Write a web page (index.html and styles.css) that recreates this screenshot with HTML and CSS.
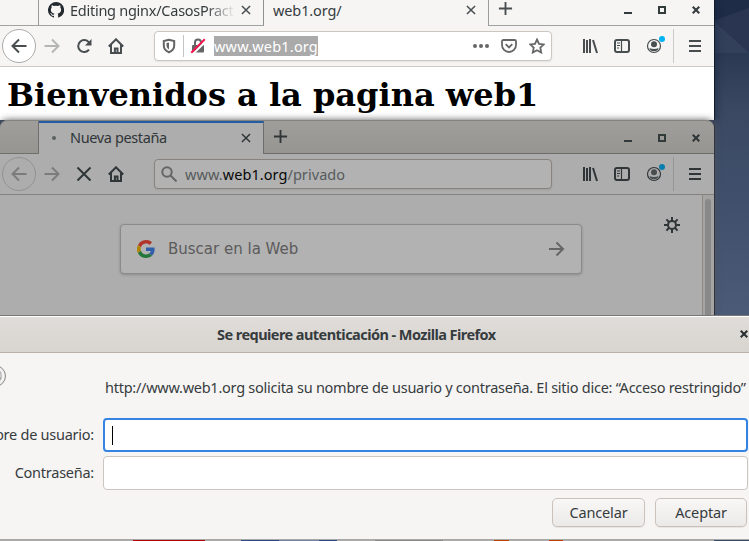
FILE: index.html
```html
<!DOCTYPE html>
<html lang="es">
<head>
<meta charset="utf-8">
<title>Mozilla Firefox</title>
<link rel="stylesheet" href="styles.css">
</head>
<body>
<svg class="defs" aria-hidden="true">
  <symbol id="back" viewBox="0 0 16 16"><path d="M8 1.500 1.500 8 8 14.500M1.500 8H15.500" /></symbol>
  <symbol id="forward" viewBox="0 0 16 16"><path d="m8 1.500 6.500 6.500L8 14.500M14.500 8H.5" /></symbol>
  <symbol id="home" viewBox="0 0 16 16"><path d="M.8 8.500 8 1.300l7.200 7.200M3 7v8h10V7M6.900 15v-4.500h2.600V15" /></symbol>
  <symbol id="cross" viewBox="0 0 16 16"><path d="m1.500 1.500 13 13m0-13-13 13" /></symbol>
  <symbol id="plus" viewBox="0 0 16 16"><path d="M8 1v14M1 8h14" /></symbol>
  <symbol id="library" viewBox="0 0 16 16"><path d="M2 1v14M5 2v13M8 1v14M11 2l4 13" /></symbol>
  <symbol id="sidebar" viewBox="0 0 16 16"><rect x="1" y="2" width="14" height="12" rx="2"/><path class="thin" d="M7.500 2v12M3 5h3M3 7.500h3M3 10h2"/></symbol>
  <symbol id="account" viewBox="0 0 16 16"><circle class="thin" cx="8" cy="8" r="6.500"/><circle class="solid" cx="8" cy="6.300" r="3"/><path class="solid" d="M3.500 10q1.700 1.100 4.500 1.100t4.500-1.100Q12 13.300 8 13.300T3.500 10Z"/></symbol>
  <symbol id="menu" viewBox="0 0 16 16"><path d="M2 3h12M2 8h12M2 13h12"/></symbol>
</svg>

<section class="window">
  <header class="tabs">
    <div class="stub"></div>
    <div class="tab first"><svg class="github" viewBox="0 0 16 16"><path d="M8 0a8 8 0 0 0-2.500 15.600c.4.100.5-.2.500-.4v-1.400c-2.200.5-2.700-1-2.700-1-.4-.9-.9-1.200-.9-1.200-.7-.5.100-.5.100-.5.800.1 1.200.8 1.200.8.700 1.200 1.900.9 2.300.7.100-.5.300-.9.500-1.100-1.800-.2-3.600-.9-3.600-4 0-.9.300-1.600.8-2.100-.1-.2-.4-1 .1-2.100 0 0 .7-.2 2.200.8a7.600 7.600 0 0 1 4 0c1.500-1 2.200-.8 2.200-.8.500 1.100.2 1.900.1 2.100.5.500.8 1.200.8 2.100 0 3.100-1.800 3.800-3.600 4 .3.300.6.800.6 1.500v2.200c0 .2.100.5.500.4A8 8 0 0 0 8 0Z"/></svg><span class="label editing">Editing nginx/CasosPract</span><svg class="icon close"><use href="#cross"/></svg></div>
    <div class="tab second"><span class="label web">web1.org/</span><svg class="icon close"><use href="#cross"/></svg></div>
    <div class="rest"><svg class="icon plus"><use href="#plus"/></svg><div class="controls"><i class="min"></i><i class="max"></i><svg class="icon wclose"><use href="#cross"/></svg></div></div>
  </header>
  <nav class="toolbar">
    <span class="backbtn"><svg class="icon"><use href="#back"/></svg></span>
    <svg class="icon fwd"><use href="#forward"/></svg>
    <svg class="icon reload" viewBox="0 0 16 16"><path d="M13 11.700A6 6 0 1 1 12.900 4.300L14 6"/><path class="solid" d="M15.500 1v6.500H9Z"/></svg>
    <svg class="icon home"><use href="#home"/></svg>
    <div class="urlbar">
      <svg class="icon shield" viewBox="0 0 16 16"><path d="M8 1.800 2.800 3v4.500c0 3.300 2.200 5.600 5.200 6.800 3-1.200 5.200-3.500 5.200-6.800V3Z"/><path class="solid" d="M8 4.500v7c-1.600-1-2.500-2.300-2.500-4V5Z"/></svg>
      <span class="urlsep"></span>
      <svg class="icon lock" viewBox="0 0 16 16"><path d="M5 7V4.500a3 3 0 0 1 6 0V7"/><rect class="solid" x="2" y="7" width="12" height="7.500" rx="1"/><path class="gap" d="M2.800 16.200 16.200 2.800"/><path class="red" d="M1.200 14.800 14.800 1.200"/></svg>
      <span class="selected">www.web1.org</span>
      <span class="dots"><i></i><i></i><i></i></span>
      <svg class="icon pocket" viewBox="0 0 16 16"><path d="M2.500 2h11Q15 2 15 3.500V7a7 7 0 0 1-14 0V3.500Q1 2 2.500 2ZM4.700 6.200 8 9.400l3.300-3.200"/></svg>
      <svg class="icon star" viewBox="0 0 16 16"><path d="m8 1.500 2 4.300 4.800.6-3.500 3.200.9 4.900L8 12.200l-4.200 2.300.9-4.900L1.200 6.400 6 5.800Z"/></svg>
    </div>
    <div class="tools"><svg class="icon"><use href="#library"/></svg><svg class="icon"><use href="#sidebar"/></svg><span class="account"><svg class="icon"><use href="#account"/></svg><i></i></span><span class="toolsep"></span><svg class="icon menu"><use href="#menu"/></svg></div>
  </nav>
  <main><h1>Bienvenidos a la pagina web1</h1></main>
</section>

<section class="window dim">
  <header class="tabs">
    <div class="stub"></div>
    <div class="tab active"><span class="loading"></span><span class="label nueva">Nueva pestaña</span><svg class="icon close"><use href="#cross"/></svg></div>
    <div class="rest"><svg class="icon plus"><use href="#plus"/></svg><div class="controls"><i class="min"></i><i class="max"></i><svg class="icon wclose"><use href="#cross"/></svg></div></div>
  </header>
  <nav class="toolbar">
    <span class="backbtn"><svg class="icon"><use href="#back"/></svg></span>
    <svg class="icon fwd"><use href="#forward"/></svg>
    <svg class="icon reload"><use href="#cross"/></svg>
    <svg class="icon home"><use href="#home"/></svg>
    <div class="urlbar"><svg class="icon search" viewBox="0 0 16 16"><circle cx="6" cy="6" r="4.700"/><path d="m9.500 9.500 6 6"/></svg><span class="address">www.<b>web1.org</b>/privado</span></div>
    <div class="tools"><svg class="icon"><use href="#library"/></svg><svg class="icon"><use href="#sidebar"/></svg><span class="account"><svg class="icon"><use href="#account"/></svg><i></i></span><span class="toolsep"></span><svg class="icon menu"><use href="#menu"/></svg></div>
  </nav>
  <main class="newtab">
    <div class="searchbox"><svg class="google" viewBox="0 0 48 48"><path class="g-red" d="M24 9.500c3.500 0 6.700 1.200 9.200 3.600l6.900-6.900A24 24 0 0 0 2.600 13.200l8 6.200C12.400 13.700 17.700 9.500 24 9.500Z"/><path class="g-blue" d="M47 24.500c0-1.600-.2-3.100-.4-4.500H24v9h12.900a11 11 0 0 1-4.800 7.300l7.700 6C44.400 38 47 31.800 47 24.500Z"/><path class="g-yellow" d="M10.500 28.600a14 14 0 0 1 0-9.200l-8-6.200a24 24 0 0 0 0 21.600Z"/><path class="g-green" d="M24 48c6.500 0 11.900-2.100 15.900-5.800l-7.700-6c-2.200 1.500-4.900 2.300-8.200 2.300-6.300 0-11.600-4.200-13.500-9.900l-8 6.200A24 24 0 0 0 24 48Z"/></svg><span>Buscar en la Web</span><svg class="icon go"><use href="#forward"/></svg></div>
    <svg class="icon gear" viewBox="0 0 16 16"><circle cx="8" cy="8" r="4"/><path d="M8 0v4m0 8v4M0 8h4m8 0h4M2.400 2.400l2.800 2.800m5.600 5.600 2.800 2.800m0-11.200-2.800 2.800m-5.600 5.600-2.800 2.800"/></svg>
    <div class="scroll"><i></i></div>
  </main>
</section>

<section class="dialog">
  <header><strong>Se requiere autenticación - Mozilla Firefox</strong><svg class="icon dclose"><use href="#cross"/></svg></header>
  <div class="message"><svg class="keys" viewBox="0 0 24 24"><circle class="ring" cx="12" cy="12" r="10.500"/><circle class="ring inner" cx="12" cy="12" r="8"/><path d="M10 17q5 1 8-3M14 9l3-1-1 4"/></svg><p>http://www.web1.org solicita su nombre de usuario y contraseña. El sitio dice: “Acceso restringido”</p></div>
  <form>
    <label class="userlabel">Nombre de usuario:</label><div class="field focus"><i></i></div>
    <label>Contraseña:</label><div class="field"></div>
  </form>
  <footer><button class="cancel">Cancelar</button><button class="accept">Aceptar</button></footer>
</section>
<div class="bottom"></div>
</body>
</html>
```
FILE: styles.css
```css
*{box-sizing:border-box}
body{margin:0;width:749px;height:541px;overflow:hidden;display:flex;flex-direction:column;font-family:"Noto Sans",sans-serif;font-size:14.5px;color:#363c3e;background:linear-gradient(42deg,#33405a 0 23px,transparent 24px) 714px 20px/35px 33px no-repeat,linear-gradient(160deg,#1f2c47 0 19px,#2a3651 20px) 714px 0/35px 53px no-repeat,linear-gradient(#2b3852 50px,#3b4862 110px,#40506c 200px,#4b5b78 320px,#64758f)}
.defs{position:absolute;width:0;height:0}
.icon{width:16px;height:16px;flex:none;display:block;fill:none;stroke:#484e50;stroke-width:2}
.thin{stroke-width:1.2}.solid{fill:#484e50;stroke:none}
.window{width:714px;height:120px;flex:none;background:#f6f5f4;box-shadow:1px 0 #111b2c,3px 0 7px #14203970}
.tabs{display:flex;height:26px;line-height:20px}
.stub{width:39px;border-right:1px solid #989b98;border-bottom:1px solid #a2a39f}
.tab{display:flex;flex:none;white-space:nowrap}
.first{width:225px;padding-left:9px;border-right:1px solid #8e9290;border-bottom:1px solid #a2a39f}
.second{width:225px;padding-left:9px;border-right:1px solid #999c99}
.github{width:16px;height:16px;margin:2px 6px 0 0;fill:#24292e;flex:none}
.label{display:block;overflow:hidden}
.editing{width:165px;letter-spacing:-.26px;-webkit-mask-image:linear-gradient(90deg,#000 136px,transparent)}
.close{width:10px;height:10px;margin:5px 0 0 6px;stroke-width:2.400}
.second .close{margin-left:auto;margin-right:12px}
.web{letter-spacing:-.12px}
.rest{display:flex;flex:1;border-bottom:1px solid #a2a39f}
.plus{width:15px;height:15px;margin:1px 0 0 9px}
.controls{display:flex;margin-left:auto;padding-top:6px}
.min{width:8px;height:2px;background:#333a3c;margin:6px 26px 0 0}
.max{width:8px;height:8px;border:2px solid #333a3c;margin-right:26px}
.wclose{width:8px;height:8px;margin-right:14px;stroke:#333a3c;stroke-width:4}
.toolbar{height:41px;display:flex;align-items:center;border-bottom:1px solid #cdc7c1}
.backbtn{width:34px;height:34px;margin-left:2px;border:1px solid #aaa;border-radius:50%;background:#fff;display:grid;place-items:center}
.fwd{margin-left:8px;stroke:#b4b5b5}.reload,.home{margin-left:16px}
.urlbar{width:398px;height:30px;margin-left:30px;background:#fff;border:1px solid #cbc6c0;border-radius:4px;display:flex;align-items:center;line-height:20px;box-shadow:0 1px 2px #00000015}
.shield{margin-left:6px;stroke:#656565}.shield .solid,.lock .solid{fill:#656565}.urlsep{width:1px;height:22px;background:#c4c4c4;margin:0 6px}
.lock{stroke:#656565}.lock .red{stroke:#f01850}.lock .gap{stroke:#fff}
.selected{background:#aaa;color:#fff;margin-left:8px;width:104px;white-space:nowrap;letter-spacing:.19px}
.dots{display:flex;gap:2px;margin-left:155px}.dots i{width:4px;height:4px;background:#666;border-radius:50%}
.pocket,.star{margin-left:12px;stroke:#666;stroke-width:1.800}
.tools{display:flex;align-items:center;margin-left:30px}.tools>.icon:nth-child(2){margin-left:16px}
.account{position:relative;margin-left:16px}.account i{position:absolute;left:13px;top:-2px;width:6px;height:6px;border-radius:50%;background:#00b3f4}
.toolsep{width:1px;height:34px;background:#ccc;margin-left:11px}.menu{margin-left:13px}
main{background:#fff;height:53px}
h1{font:bold 32px/37px "DejaVu Serif",serif;color:#000;margin:0;padding:10px 0 0 7px;white-space:nowrap}
.dim{height:195px;background:#adadad;border-radius:8px 8px 0 0;box-shadow:0 0 7px #555,1px 0 #111b2c;position:relative;color:#303638}
.dim .tabs{height:34px;line-height:33px;background:linear-gradient(#9f9e9b,#969590);border-top:1px solid #83837f;border-radius:8px 8px 0 0}
.dim .stub{border-color:#706f6d}.dim .rest{border-color:#6c6c6a}
.active{width:225px;background:#adadad;border-top:2px solid #215ca4;border-right:1px solid #6d6d6c;line-height:29px}
.loading{width:4px;height:4px;border-radius:50%;background:#5d6060;margin:13px 14px 0 13px}
.nueva{width:171px;letter-spacing:-.37px}.active .close{margin:10px 0 0 0}
.dim .controls{padding-top:13px}.dim .plus{margin-top:8px}
.dim .icon:not(.fwd,.search,.go){stroke:#303638}.dim .solid{fill:#303638}
.dim .toolbar{border-color:#85817f;height:41px}.dim .backbtn{background:transparent;border-color:#929292}.dim .backbtn .icon,.dim .fwd{stroke:#7c7c7c!important}
.dim .urlbar{background:#b2b2b2;border-color:#89837f}
.search{margin-left:6px;stroke:#666}.address{margin-left:8px;color:#565a5b;letter-spacing:.06px}.address b{font-weight:400;color:#080808}
.dim .account i{background:#087eae}.dim .toolsep{background:#949494}
.newtab{background:#adadad;height:120px;display:flex}
.searchbox{margin:29px 0 0 120px;width:462px;height:50px;border:1px solid #8a8a8a;border-radius:4px;background:#b2b2b2;display:flex;align-items:center;box-shadow:0 1px 3px #0003;font:15px "DejaVu Sans",sans-serif;color:#5b5b5b;white-space:nowrap}
.google{width:18px;height:18px;margin:0 13px 0 16px}.g-red{fill:#b1342b}.g-blue{fill:#305eaa}.g-yellow{fill:#af8504}.g-green{fill:#25763b}
.go{margin:0 16px 0 auto;stroke:#666;width:17px}
.gear{margin:22px 0 0 82px}.scroll{margin-left:auto;width:12px;border-left:1px solid #8e8b87;background:#a5a4a2;padding:4px 2px 0}.scroll i{display:block;width:6px;height:130px;background:#898989;border-radius:4px}
.dialog{height:224px;flex:none;position:relative;background:#f6f5f4;border-top:1px solid #fff;box-shadow:0 -1px #777;border-bottom:1px solid #a9a9a7;margin-top:1px}
.dialog header{height:36px;background:linear-gradient(#e0ddda,#d8d4cf);border-bottom:1px solid #bcb1a9;display:flex;line-height:34px}
.dialog strong{padding-left:217px;letter-spacing:-.55px;white-space:nowrap}.dclose{width:8px;height:8px;margin:13px 1px 0 auto;stroke:#292f31;stroke-width:4}
.message{height:65px;display:flex;position:relative}.keys{position:absolute;left:-17px;top:11px;width:24px;height:24px;fill:none;stroke:#888}.ring{fill:#eee}.inner{fill:#c9c9c9;stroke:#fff}
.message p{margin:24px 0 0 105px;line-height:20px;white-space:nowrap;letter-spacing:-.26px}
form{display:grid;grid-template-columns:94px 645px;grid-template-rows:34px 34px;row-gap:4px;column-gap:9px}
label{justify-self:end;line-height:32px;white-space:nowrap;letter-spacing:-.25px}
.field{background:#fff;border:1px solid #cbc6c0;border-radius:4px}.focus{border:2px solid #3584e4;padding:6px 7px}.focus i{display:block;width:1px;height:19px;background:#000}
footer{display:flex;justify-content:flex-end;gap:10px;padding:8px 2px 0 0}
button{height:29px;border:1px solid #cbc1b9;border-radius:5px;background:linear-gradient(#f8f7f6,#eceae8);font:14.5px "Noto Sans",sans-serif;color:#363c3e;padding:0 0 2px;letter-spacing:-.15px;box-shadow:0 1px 1px #0001}.cancel{width:93px}.accept{width:92px}
.bottom{height:1px;background:linear-gradient(90deg,#aaa 133px,#b00000 133px 205px,#aaa 205px 241px,#294b80 241px 279px,#7183a4 279px 319px,#294b80 319px 337px,#aaa 337px 375px,#888 375px 443px,#aaa 443px 494px,#bd4200 494px 509px,#aaa 509px 549px,#bd4200 549px 563px,#aaa 563px 714px,#344b6a 714px)}
```
